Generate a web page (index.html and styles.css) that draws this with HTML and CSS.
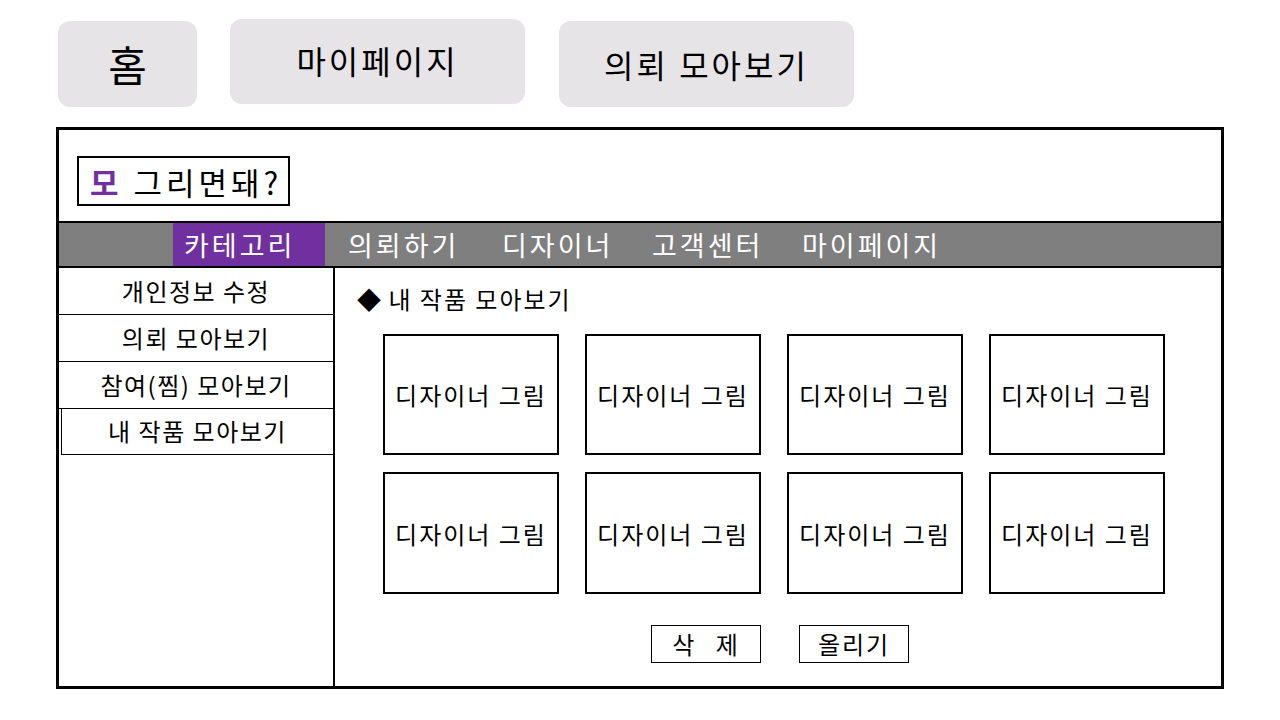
FILE: index.html
```html
<!DOCTYPE html>
<html>
<head>
    <meta charset="utf-8">
    <link rel="stylesheet" href="styles.css">
    <title>모 그리면돼? - 내 작품 모아보기</title>
</head>

<body>
    <div class="tabs">
        <div class="tab tab-home">홈</div>
        <div class="tab tab-my">마이페이지</div>
        <div class="tab tab-req">의뢰 모아보기</div>
    </div>

    <div class="frame">
        <div class="header">
            <div class="logo"><span class="logo-mark">모</span> 그리면돼?</div>
        </div>

        <div class="navbar">
            <div class="nav-item nav-cat active">카테고리</div>
            <div class="nav-item nav-req">의뢰하기</div>
            <div class="nav-item nav-des">디자이너</div>
            <div class="nav-item nav-cs">고객센터</div>
            <div class="nav-item">마이페이지</div>
        </div>

        <div class="body">
            <div class="sidebar">
                <div class="side-item">개인정보 수정</div>
                <div class="side-item">의뢰 모아보기</div>
                <div class="side-item">참여(찜) 모아보기</div>
                <div class="side-item current">내 작품 모아보기</div>
            </div>

            <div class="content">
                <h2 class="title"><span class="diamond">◆</span> 내 작품 모아보기</h2>
                <div class="grid">
                    <div class="card">디자이너 그림</div>
                    <div class="card">디자이너 그림</div>
                    <div class="card">디자이너 그림</div>
                    <div class="card">디자이너 그림</div>
                    <div class="card">디자이너 그림</div>
                    <div class="card">디자이너 그림</div>
                    <div class="card">디자이너 그림</div>
                    <div class="card">디자이너 그림</div>
                </div>
                <div class="actions">
                    <button class="btn btn-del">삭&nbsp;제</button>
                    <button class="btn">올리기</button>
                </div>
            </div>
        </div>
    </div>
</body>
</html>
```

FILE: styles.css
```css
body {
    margin: 0;
    background-color: #fff;
    font-family: "Noto Sans CJK KR", "Noto Sans", sans-serif;
    color: #000;
}

/* top tabs */
.tabs {
    display: flex;
    align-items: flex-start;
    padding: 19px 0 0 58px;
    height: 88px;
}
.tab {
    background-color: #e6e4e6;
    border-radius: 12px;
    display: flex;
    justify-content: center;
    align-items: center;
    line-height: 1;
}
.tab-home {
    width: 139px;
    height: 86px;
    margin-top: 2px;
    font-size: 42px;
}
.tab-my {
    width: 295px;
    height: 85px;
    margin-left: 33px;
    font-size: 32px;
    letter-spacing: 3px;
    padding-bottom: 4px;
    box-sizing: border-box;
}
.tab-req {
    width: 295px;
    height: 86px;
    margin-top: 2px;
    margin-left: 34px;
    font-size: 32px;
    letter-spacing: 3px;
}

/* main frame */
.frame {
    margin: 20px 0 0 56px;
    width: 1168px;
    height: 562px;
    border: 3px solid #000;
    box-sizing: border-box;
    display: flex;
    flex-direction: column;
}
.header {
    height: 91px;
    padding: 26px 0 0 18px;
    box-sizing: border-box;
}
.logo {
    display: inline-flex;
    align-items: center;
    width: 213px;
    height: 50px;
    border: 2px solid #000;
    box-sizing: border-box;
    padding-left: 11px;
    font-size: 31px;
    letter-spacing: 4px;
    line-height: 1;
    white-space: pre;
}
.logo-mark {
    color: #7030a0;
    font-weight: bold;
}

.navbar {
    display: flex;
    height: 47px;
    background-color: #7f7f7f;
    border-top: 2px solid #000;
    border-bottom: 2px solid #000;
    box-sizing: border-box;
    padding-left: 114px;
}
.nav-item {
    color: #fff;
    font-size: 27px;
    letter-spacing: 3px;
    line-height: 43px;
    width: 150px;
    white-space: nowrap;
}
.nav-cat {
    width: 152px;
    padding-left: 11px;
    box-sizing: border-box;
    margin-right: 23px;
}
.nav-req {
    width: 154px;
}
.active {
    background-color: #7030a0;
}

/* body */
.body {
    flex: 1;
    display: flex;
}
.sidebar {
    width: 276px;
    border-right: 2px solid #000;
    box-sizing: border-box;
}
.side-item {
    height: 47px;
    border-bottom: 1px solid #000;
    box-sizing: border-box;
    text-align: center;
    font-size: 24px;
    letter-spacing: 1.5px;
    line-height: 45px;
}
.current {
    border-top: 1px solid #000;
    border-left: 1px solid #000;
    margin-top: -1px;
    margin-left: 2px;
    line-height: 44px;
}

.content {
    flex: 1;
    padding: 16px 0 0 22px;
}
.title {
    margin: 0;
    font-weight: normal;
    font-size: 24px;
    letter-spacing: 2px;
    line-height: 30px;
}
.diamond {
    font-size: 24px;
    letter-spacing: 0;
}
.grid {
    display: grid;
    grid-template-columns: repeat(4, 176px);
    grid-template-rows: 121px 122px;
    column-gap: 26px;
    row-gap: 17px;
    margin: 20px 0 0 26px;
}
.card {
    border: 2px solid #000;
    display: flex;
    justify-content: center;
    align-items: center;
    font-size: 24px;
    letter-spacing: 2px;
}
.actions {
    display: flex;
    justify-content: center;
    gap: 38px;
    margin-top: 31px;
    padding-right: 18px;
}
.btn {
    width: 110px;
    height: 38px;
    background-color: #fff;
    border: 1px solid #000;
    font-family: inherit;
    font-size: 24px;
    letter-spacing: 2px;
    line-height: 1;
    color: #000;
    padding: 0;
}
.btn-del {
    word-spacing: 12px;
}
```
